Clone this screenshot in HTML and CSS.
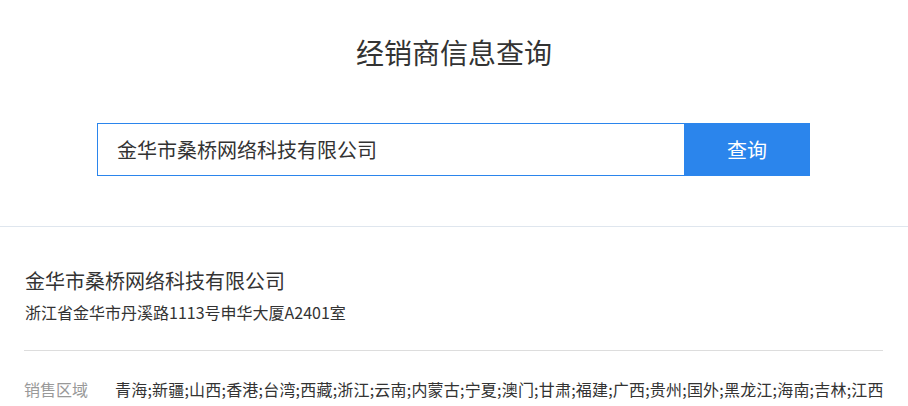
FILE: index.html
```html
<!DOCTYPE html>
<html lang="zh-CN">
<head>
    <meta charset="UTF-8">
    <meta name="viewport" content="width=device-width, initial-scale=1.0">
    <title>经销商信息查询</title>
    <link rel="stylesheet" href="styles.css">
</head>
<body>

    <div class="search-panel">
        <h2 class="title">经销商信息查询</h2>
        <form class="search-form">
            <input class="search-input" type="text" value="金华市桑桥网络科技有限公司">
            <button class="search-btn" type="button">查询</button>
        </form>
    </div>

    <div class="result">
        <div class="dealer-head">
            <h3 class="dealer-name">金华市桑桥网络科技有限公司</h3>
            <p class="dealer-addr">浙江省金华市丹溪路1113号申华大厦A2401室</p>
        </div>
        <div class="info-row">
            <span class="info-label">销售区域</span>
            <span class="info-value">青海;新疆;山西;香港;台湾;西藏;浙江;云南;内蒙古;宁夏;澳门;甘肃;福建;广西;贵州;国外;黑龙江;海南;吉林;江西</span>
        </div>
    </div>

</body>
</html>
```

FILE: styles.css
```css
body {
    margin: 0;
    font-family: "Noto Sans CJK SC", "Microsoft YaHei", sans-serif;
    color: #333;
    background: #fff;
}
.search-panel {
    padding: 34px 0 50px;
    border-bottom: 1px solid #dfe6ee;
    text-align: center;
}
.title {
    margin: 0;
    font-size: 28px;
    font-weight: normal;
    line-height: 36px;
    color: #333;
}
.search-form {
    display: flex;
    justify-content: center;
    margin-top: 53px;
    padding-right: 1px;
}
.search-input {
    box-sizing: border-box;
    width: 587px;
    height: 53px;
    padding: 0 19px;
    border: 1px solid #2b85ec;
    border-right: none;
    outline: none;
    font-family: inherit;
    font-size: 20px;
    color: #333;
}
.search-btn {
    width: 126px;
    height: 53px;
    border: none;
    background-color: #2b85ec;
    color: #fff;
    font-family: inherit;
    font-size: 20px;
    cursor: pointer;
}
.result {
    padding: 0 25px 0 24px;
}
.dealer-head {
    padding: 40px 0 27px 1px;
    border-bottom: 1px solid #ddd;
}
.dealer-name {
    margin: 0;
    font-size: 20px;
    font-weight: normal;
    line-height: 28px;
}
.dealer-addr {
    margin: 6px 0 0;
    font-size: 16px;
    line-height: 22px;
}
.info-row {
    display: flex;
    padding-top: 26px;
    font-size: 16px;
    line-height: 24px;
}
.info-label {
    flex: none;
    width: 91px;
    color: #999;
}
.info-value {
    color: #333;
    letter-spacing: 0.2px;
    white-space: nowrap;
}
```
